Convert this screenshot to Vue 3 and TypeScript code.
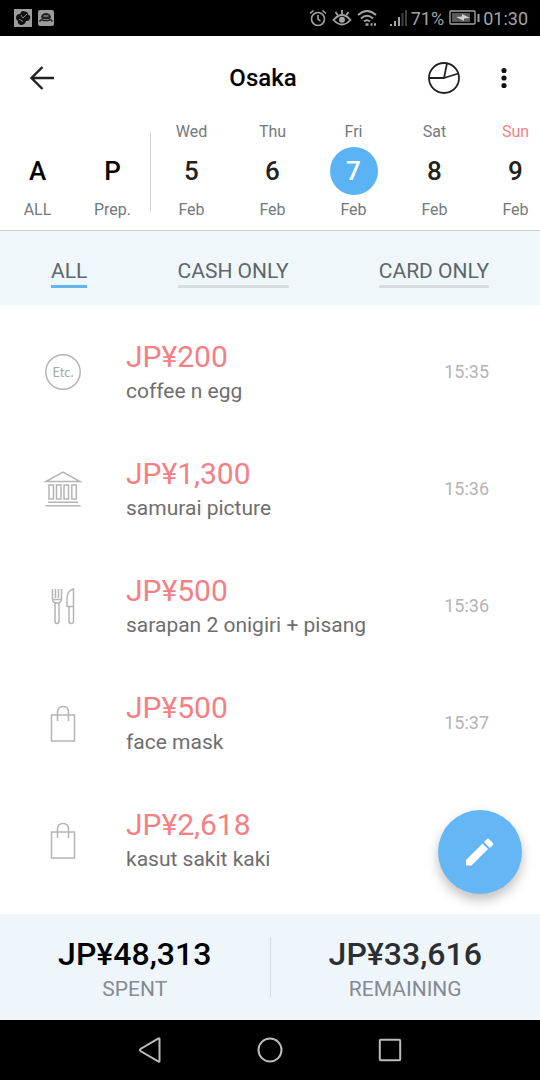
<script setup lang="ts">
import { computed, ref } from 'vue'

type Category = 'etc' | 'museum' | 'food' | 'shopping'
type Payment = 'all' | 'cash' | 'card'

interface Day {
  weekday: string
  date: string
  month: string
  holiday?: boolean
}

interface Expense {
  id: number
  category: Category
  amount: number
  note: string
  time: string
}

const presets: Day[] = [
  { weekday: '', date: 'A', month: 'ALL' },
  { weekday: '', date: 'P', month: 'Prep.' },
]

const days: Day[] = [
  { weekday: 'Wed', date: '5', month: 'Feb' },
  { weekday: 'Thu', date: '6', month: 'Feb' },
  { weekday: 'Fri', date: '7', month: 'Feb' },
  { weekday: 'Sat', date: '8', month: 'Feb' },
  { weekday: 'Sun', date: '9', month: 'Feb', holiday: true },
]

const filters: { key: Payment; label: string }[] = [
  { key: 'all', label: 'ALL' },
  { key: 'cash', label: 'CASH ONLY' },
  { key: 'card', label: 'CARD ONLY' },
]

const expenses: Expense[] = [
  { id: 1, category: 'etc', amount: 200, note: 'coffee n egg', time: '15:35' },
  { id: 2, category: 'museum', amount: 1300, note: 'samurai picture', time: '15:36' },
  { id: 3, category: 'food', amount: 500, note: 'sarapan 2 onigiri + pisang', time: '15:36' },
  { id: 4, category: 'shopping', amount: 500, note: 'face mask', time: '15:37' },
  { id: 5, category: 'shopping', amount: 2618, note: 'kasut sakit kaki', time: '' },
]

const selected = ref('7')
const payment = ref<Payment>('all')
const spent = ref(48313)
const budget = ref(81929)
const remaining = computed(() => budget.value - spent.value)

const yen = (value: number): string => 'JP¥' + value.toLocaleString('en-US')
</script>

<template>
  <div class="screen">
    <div class="status">
      <div class="status-group">
        <svg width="18" height="18" viewBox="0 0 18 18">
          <rect width="18" height="18" fill="#9c9c9c" />
          <path d="M2 9q0-4 4-4q1-4 5-2.500q3 0 3 3q3 1 2 4q-1 3-4 2.500q-1 4-5 4q-4-1-3-4q-2-1-2-3z" fill="#101010" />
          <path d="M7 6l2 3 4-4M5 10l4 2.500" fill="none" stroke="#8a8a8a" />
        </svg>
        <svg width="18" height="18" viewBox="0 0 18 18">
          <rect x="1" y="1" width="16" height="16" rx="2" fill="#9c9c9c" />
          <path d="M4 8q1-4 5-4t5 4l-1 2H5z" fill="#222" />
          <path d="M6.500 7h5" stroke="#aaa" />
          <path d="M2.500 12.500q2-3 4-1h5q2-2 4 1" fill="none" stroke="#222" stroke-width="1.500" />
        </svg>
      </div>
      <div class="status-group status-right">
        <svg width="18" height="18" viewBox="0 0 18 18" fill="none" stroke="#a4a4a4" stroke-width="1.600">
          <circle cx="9" cy="10" r="6.500" />
          <path d="M9 6v4l2.500 2M1 4.500l3.500-3M17 4.500l-3.500-3" />
        </svg>
        <svg width="20" height="18" viewBox="0 0 20 18" fill="none" stroke="#a4a4a4" stroke-width="1.800">
          <path d="M1.500 11q8.500-10 17 0q-8.500 9-17 0zM10 5V1M5.500 6L3.500 3M14.500 6l2-3" />
          <circle cx="10" cy="10.800" r="3" fill="#a4a4a4" stroke="none" />
        </svg>
        <svg width="22" height="18" viewBox="0 0 22 18" fill="none" stroke="#a4a4a4" stroke-width="1.900">
          <path d="M1 6q9-8 18 0M4 9.500q6-5.500 12 0M7 12.500q3-2.500 6 0" />
          <path d="M8.500 15.500h3M13.500 15.500h2M17 15.500h2" stroke-width="2.600" />
        </svg>
        <svg class="signal" width="18" height="18" viewBox="0 0 18 18">
          <path d="M0 15h2v2H0zM4 12h2v5H4zM8 8h2v9H8z" fill="#a4a4a4" />
          <path d="M11.500 4h2v13h-2zM15 1h2v16h-2z" fill="#404040" />
        </svg>
        <span>71%</span>
        <svg width="31" height="16" viewBox="0 0 31 16">
          <rect x="1" y="1" width="25" height="13" rx="1" fill="none" stroke="#a4a4a4" stroke-width="1.400" />
          <rect x="3" y="3" width="18" height="9" fill="#585858" />
          <path d="M7 7l6-.5V4l8 4-6 .5V11z" fill="#d0d0d0" />
          <path d="M29.500 4v8" stroke="#a4a4a4" stroke-width="2" />
        </svg>
        <span>01:30</span>
      </div>
    </div>

    <header class="appbar">
      <button class="icon-btn back" aria-label="Back">
        <svg width="26" height="26" viewBox="0 0 26 26" fill="none" stroke="#222" stroke-width="2.400">
          <path d="M25 13H2.500M13.500 2L2.500 13l11 11" />
        </svg>
      </button>
      <h1>Osaka</h1>
      <div class="actions">
        <button class="icon-btn" aria-label="Statistics">
          <svg width="34" height="34" viewBox="0 0 34 34" fill="none" stroke="#222" stroke-width="1.800">
            <circle cx="17" cy="17" r="15" />
            <path d="M2 17h15l3-14.500M17 17l14.300-4.500" />
          </svg>
        </button>
        <button class="icon-btn" aria-label="More options">
          <svg width="6" height="22" viewBox="0 0 6 22" fill="#111">
            <circle cx="3" cy="3.500" r="2.600" />
            <circle cx="3" cy="11" r="2.600" />
            <circle cx="3" cy="18.500" r="2.600" />
          </svg>
        </button>
      </div>
    </header>

    <nav class="dates" aria-label="Trip days">
      <div class="presets">
        <button
          v-for="p in presets"
          :key="p.date"
          class="day preset"
          :class="{ active: selected === p.date }"
          @click="selected = p.date"
        >
          <span class="weekday"></span>
          <span class="date">{{ p.date }}</span>
          <span class="month">{{ p.month }}</span>
        </button>
      </div>
      <div class="days">
        <button
          v-for="d in days"
          :key="d.date"
          class="day"
          :class="{ active: selected === d.date, holiday: d.holiday }"
          @click="selected = d.date"
        >
          <span class="weekday">{{ d.weekday }}</span>
          <span class="date">{{ d.date }}</span>
          <span class="month">{{ d.month }}</span>
        </button>
      </div>
    </nav>

    <div class="filters">
      <button
        v-for="f in filters"
        :key="f.key"
        class="filter"
        :class="{ active: payment === f.key }"
        @click="payment = f.key"
      >
        {{ f.label }}
      </button>
    </div>

    <main class="content">
      <ul class="expenses">
        <li v-for="e in expenses" :key="e.id" class="expense">
          <svg class="category" width="40" height="40" viewBox="0 0 40 40">
            <template v-if="e.category === 'etc'">
              <circle cx="20" cy="20" r="17.200" />
              <text x="20" y="25" text-anchor="middle">Etc.</text>
            </template>
            <path
              v-else-if="e.category === 'museum'"
              d="M3 12.500L20 3l17 9.500zM6 16h4.500v14H6zM13.500 16H18v14h-4.500zM21 16h4.500v14H21zM28.800 16h4.500v14h-4.500zM5 33.200h30M2.500 36.800h35"
            />
            <path
              v-else-if="e.category === 'food'"
              d="M9.500 3v10q0 4 4.500 4t4.500-4V3M12.500 3v9M15.500 3v9M9.500 13.500h9M12 17v18q0 2.500 2 2.500t2-2.500V17M30.500 3q-6 1-6.500 9v8.500h6.500zM26 20.500V35q0 2.500 2.300 2.500t2.200-2.500V20.500"
            />
            <path
              v-else
              d="M8.500 12h23v26h-23zM14.500 18V9.500q0-6 5.500-6t5.500 6V18"
            />
          </svg>
          <div class="details">
            <strong class="amount">{{ yen(e.amount) }}</strong>
            <span class="note">{{ e.note }}</span>
          </div>
          <time v-if="e.time" class="time">{{ e.time }}</time>
        </li>
      </ul>
      <button class="fab" aria-label="Add expense">
        <svg width="30" height="30" viewBox="0 0 30 30" fill="#fff">
          <path d="M1 23L17.500 6.500l5.500 5.500L6.500 28.500H1zM19 5L22 2q1-.8 2 0l4 4q.8 1 0 2l-3.200 3z" />
        </svg>
      </button>
    </main>

    <footer class="totals">
      <div class="total">
        <strong>{{ yen(spent) }}</strong>
        <span>SPENT</span>
      </div>
      <div class="total remaining">
        <strong>{{ yen(remaining) }}</strong>
        <span>REMAINING</span>
      </div>
    </footer>

    <div class="system-nav">
      <button aria-label="System back">
        <svg width="28" height="28" viewBox="0 0 28 28">
          <path d="M23.500 3v22q0 1-1 .5L4.500 15q-1-1 0-2l18-10.500q1-.5 1 .5z" />
        </svg>
      </button>
      <button aria-label="Home">
        <svg width="28" height="28" viewBox="0 0 28 28"><circle cx="14" cy="14" r="11.500" /></svg>
      </button>
      <button aria-label="Recent apps">
        <svg width="28" height="28" viewBox="0 0 28 28">
          <rect x="3.800" y="3.800" width="20.400" height="20.400" rx="1" />
        </svg>
      </button>
    </div>
  </div>
</template>

<style>
body {
  margin: 0;
}
</style>

<style scoped>
.screen {
  display: flex;
  flex-direction: column;
  min-height: 100vh;
  overflow: hidden;
  background: #fff;
  color: #222;
  font-family: Roboto, 'Liberation Sans', sans-serif;
}

button {
  padding: 0;
  border: 0;
  background: none;
  color: inherit;
  font: inherit;
  cursor: pointer;
}

svg {
  display: block;
  flex: none;
}

.status {
  display: flex;
  align-items: center;
  justify-content: space-between;
  height: 36px;
  padding: 0 12px 0 14px;
  background: #000;
  color: #a4a4a4;
  font-size: 18px;
}

.status-group {
  display: flex;
  align-items: center;
  gap: 5px;
}

.signal {
  margin-left: 6px;
}

.status-right span {
  margin-left: -2px;
}

.appbar {
  display: grid;
  grid-template-columns: 1fr auto 1fr;
  align-items: center;
  height: 84px;
  padding: 0 33px 0 29px;
}

.icon-btn {
  display: flex;
  justify-content: center;
}

.back {
  justify-self: start;
}

.appbar h1 {
  margin: 0 10px 0 0;
  font-size: 24px;
  font-weight: 500;
  color: #000;
}

.actions {
  display: flex;
  align-items: center;
  justify-content: flex-end;
  gap: 40px;
}

.dates {
  display: flex;
  height: 110px;
  border-bottom: 1px solid #c9cfd2;
}

.presets {
  display: flex;
  flex: none;
  height: 80px;
  margin-top: 12px;
  border-right: 1px solid #d4d4d4;
}

.presets .day {
  margin-top: -12px;
}

.days {
  display: flex;
  flex: 1;
  min-width: 0;
  overflow: hidden;
}

.day {
  display: flex;
  flex: none;
  flex-direction: column;
  align-items: center;
  width: 81px;
  height: 110px;
  color: #73797e;
  font-size: 16px;
  line-height: 24px;
}

.day.preset {
  width: 75px;
}

.weekday {
  height: 24px;
}

.date {
  width: 48px;
  height: 48px;
  margin: 3px 0;
  border-radius: 50%;
  color: #222;
  font-size: 26px;
  font-weight: 500;
  line-height: 48px;
}

.preset .date {
  color: #000;
}

.active .date {
  background: #5ab3f4;
  color: #fff;
}

.holiday .weekday {
  color: #f48085;
}

.filters {
  display: flex;
  align-items: center;
  justify-content: space-between;
  height: 74px;
  padding: 0 51px;
  background: #eff7fb;
}

.filter {
  margin-top: 9px;
  border-bottom: 3px solid #d9dcde;
  color: #5e676b;
  font-size: 21px;
  line-height: 28px;
}

.filter.active {
  border-color: #62b5ee;
}

.content {
  position: relative;
  flex: 1;
}

.expenses {
  margin: 0;
  padding: 8px 0 16px;
  list-style: none;
}

.expense {
  display: flex;
  align-items: center;
  height: 117px;
  padding: 0 51px 0 43px;
}

.category {
  fill: none;
  stroke: #b5b5b5;
  stroke-width: 1.5;
}

.category text {
  fill: #a8a8a8;
  stroke: none;
  font-family: Lato, sans-serif;
  font-size: 13px;
}

.details {
  display: flex;
  flex: 1;
  flex-direction: column;
  min-width: 0;
  margin-left: 43px;
}

.amount {
  color: #f48085;
  font-size: 30px;
  font-weight: 400;
  line-height: 38px;
}

.note {
  color: #6e6e6e;
  font-size: 21px;
  line-height: 30px;
}

.time {
  color: #b4b4b4;
  font-size: 18px;
}

.fab {
  position: absolute;
  right: 18px;
  bottom: 20px;
  display: flex;
  align-items: center;
  justify-content: center;
  width: 84px;
  height: 84px;
  border-radius: 50%;
  background: #64b6f4;
  box-shadow: 0 6px 12px rgba(0, 0, 0, 0.25);
}

.totals {
  display: flex;
  align-items: center;
  height: 106px;
  background: #eff6fb;
}

.total {
  display: flex;
  flex: 1;
  flex-direction: column;
  align-items: center;
  justify-content: center;
  height: 60px;
}

.total strong {
  margin-top: 6px;
  color: #000;
  font-size: 32px;
  font-weight: 500;
  line-height: 38px;
}

.total span {
  color: #858b94;
  font-size: 21px;
  line-height: 32px;
}

.remaining {
  border-left: 1px solid #d5dde2;
}

.remaining strong {
  color: #2b2f33;
}

.system-nav {
  display: flex;
  justify-content: center;
  height: 60px;
  background: #000;
}

.system-nav button {
  display: flex;
  align-items: center;
  justify-content: center;
  width: 120px;
}

.system-nav svg {
  fill: none;
  stroke: #bcbcbc;
  stroke-width: 2;
}
</style>
